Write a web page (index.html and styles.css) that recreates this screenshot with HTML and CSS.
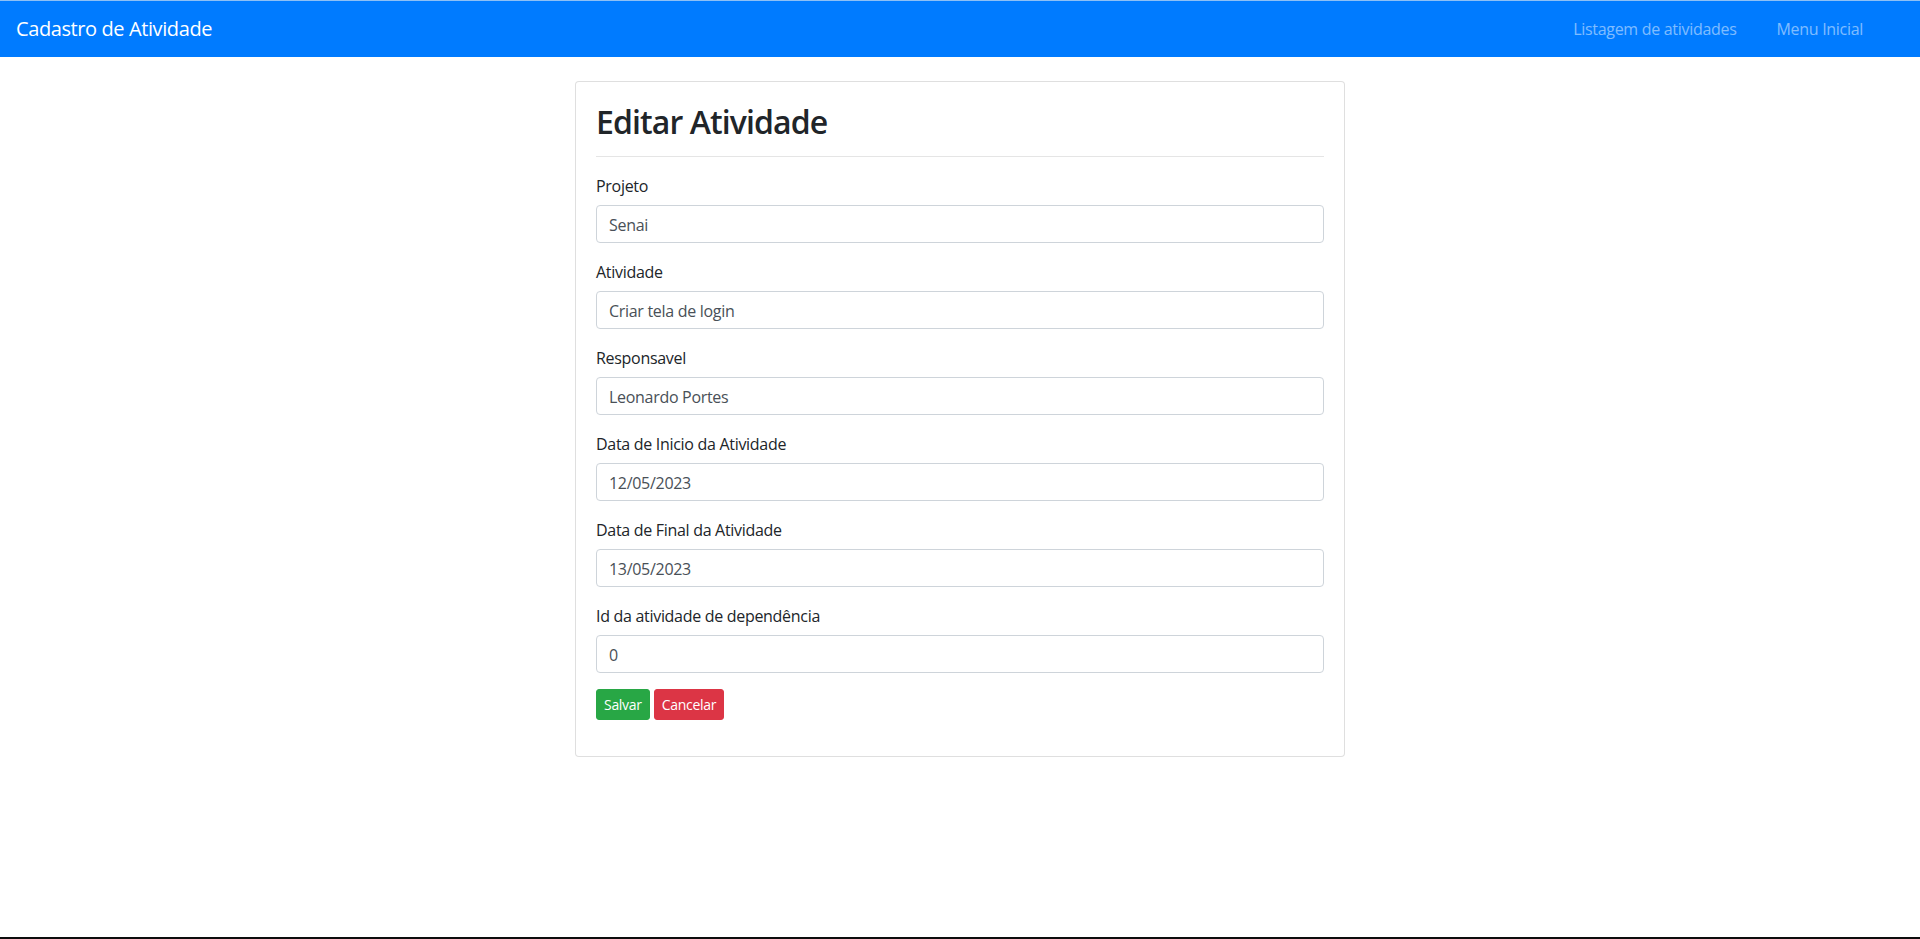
FILE: index.html
```html
<!DOCTYPE html>
<html lang="pt-BR">
<head>
<meta charset="utf-8">
<title>Editar Atividade</title>
<link rel="stylesheet" href="styles.css">
</head>
<body>
<div class="page">
  <nav class="navbar">
    <a class="brand" href="#">Cadastro de Atividade</a>
    <ul class="nav">
      <li><a class="nav-link" href="#">Listagem de atividades</a></li>
      <li><a class="nav-link" href="#">Menu Inicial</a></li>
    </ul>
  </nav>
  <main class="main">
    <div class="card">
      <h2 class="title">Editar Atividade</h2>
      <hr class="divider">
      <form class="form">
        <div class="form-group">
          <label class="label">Projeto</label>
          <input class="control" type="text" value="Senai">
        </div>
        <div class="form-group">
          <label class="label">Atividade</label>
          <input class="control" type="text" value="Criar tela de login">
        </div>
        <div class="form-group">
          <label class="label">Responsavel</label>
          <input class="control" type="text" value="Leonardo Portes">
        </div>
        <div class="form-group">
          <label class="label">Data de Inicio da Atividade</label>
          <input class="control" type="text" value="12/05/2023">
        </div>
        <div class="form-group">
          <label class="label">Data de Final da Atividade</label>
          <input class="control" type="text" value="13/05/2023">
        </div>
        <div class="form-group">
          <label class="label">Id da atividade de dependência</label>
          <input class="control" type="text" value="0">
        </div>
        <div class="form-group actions">
          <button class="btn btn-success" type="button">Salvar</button>
          <button class="btn btn-danger" type="button">Cancelar</button>
        </div>
      </form>
    </div>
  </main>
  <div class="taskbar-edge"></div>
</div>
</body>
</html>
```
FILE: styles.css
```css
* { box-sizing: border-box; }
html, body { margin: 0; padding: 0; }
body {
  font-family: "Open Sans", "Noto Sans", "Liberation Sans", sans-serif;
  font-size: 16px;
  line-height: 1.5;
  color: #212529;
  background: #fff;
  letter-spacing: -0.3px;
}
.page {
  min-height: 100vh;
  display: flex;
  flex-direction: column;
}
.navbar {
  display: flex;
  align-items: center;
  justify-content: space-between;
  height: 57px;
  border-top: 1px solid #8ec0f5;
  background: #007bff;
  padding: 0 37px 0 16px;
}
.brand {
  color: #fff;
  font-size: 20px;
  line-height: 30px;
  letter-spacing: -0.4px;
  text-decoration: none;
}
.nav {
  display: flex;
  list-style: none;
  margin: 0;
  padding: 0;
}
.nav-link {
  display: block;
  padding: 8px 20px;
  color: rgba(255,255,255,.5);
  text-decoration: none;
}
.main {
  flex: 1;
  display: flex;
  justify-content: center;
  align-items: flex-start;
  padding-top: 24px;
}
.card {
  width: 770px;
  border: 1px solid rgba(0,0,0,.125);
  border-radius: 4px;
  padding: 20px;
  background: #fff;
}
.title {
  margin: 0;
  padding-top: 1px;
  height: 38px;
  font-size: 32px;
  font-weight: 600;
  line-height: 38px;
  letter-spacing: -0.9px;
}
.divider {
  margin: 16px 0;
  border: 0;
  border-top: 1px solid rgba(0,0,0,.1);
}
.form { margin: 0; }
.form-group { margin-bottom: 16px; }
.label {
  display: block;
  margin-bottom: 8px;
  height: 24px;
  padding-top: 1px;
  line-height: 24px;
}
.control {
  display: block;
  width: 100%;
  height: 38px;
  padding: 7px 12px 5px;
  font-family: inherit;
  font-size: 16px;
  letter-spacing: -0.3px;
  line-height: 24px;
  color: #495057;
  background: #fff;
  border: 1px solid #ced4da;
  border-radius: 4px;
}
.actions {
  display: flex;
  gap: 4px;
}
.btn {
  font-family: inherit;
  font-size: 14px;
  letter-spacing: -0.3px;
  line-height: 21px;
  padding: 4px 7px;
  border: 1px solid transparent;
  border-radius: 3px;
  color: #fff;
  cursor: pointer;
}
.btn-success { background: #28a745; border-color: #28a745; }
.btn-danger { background: #dc3545; border-color: #dc3545; }
.taskbar-edge {
  height: 2px;
  background: #0d0d0d;
}
```
